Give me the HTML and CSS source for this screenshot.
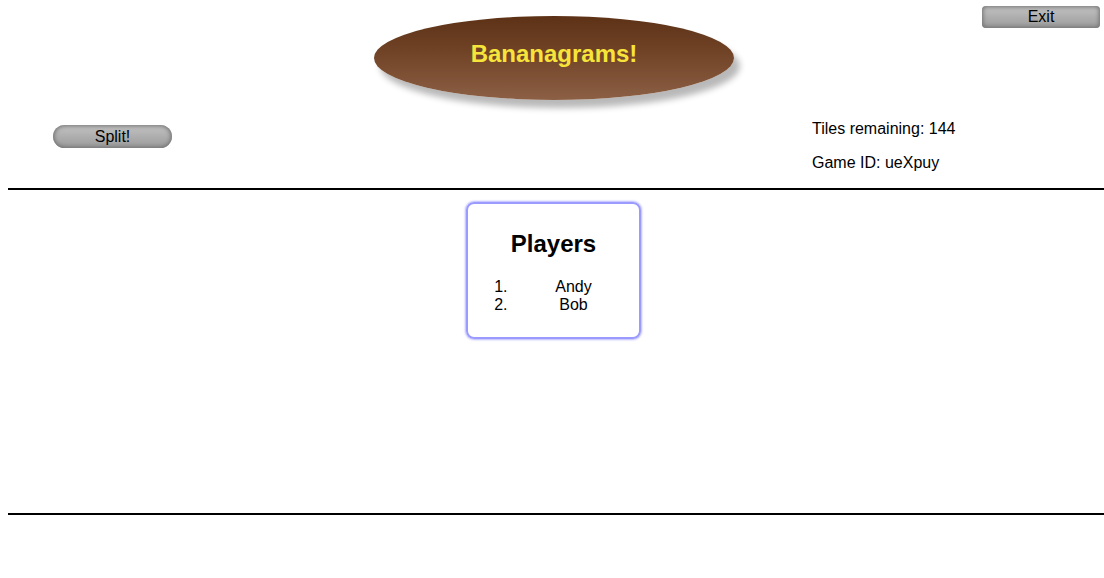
FILE: index.html
```html
<!DOCTYPE html>
<html>
<head>
<meta charset="utf-8">
<title>Bananagrams</title>
<link rel="stylesheet" href="styles.css">
</head>
<body>
<div class="page">
  <header class="header">
    <div></div>
    <div class="title"><span>Bananagrams!</span></div>
    <button class="btn exit">Exit</button>
  </header>
  <section class="controls">
    <button class="btn split">Split!</button>
    <div class="stats">
      <p>Tiles remaining: 144</p>
      <p>Game ID: ueXpuy</p>
    </div>
  </section>
  <div class="rule"></div>
  <main class="board">
    <div class="players">
      <h2>Players</h2>
      <ol>
        <li>Andy</li>
        <li>Bob</li>
      </ol>
    </div>
  </main>
  <div class="rule"></div>
</div>
</body>
</html>
```
FILE: styles.css
```css
html, body {
  margin: 0;
  padding: 0;
  background: #fff;
  overflow: hidden;
}
body {
  font-family: "Liberation Sans", Arial, sans-serif;
  font-size: 16px;
  color: #000;
}
.page {
  padding: 0 0 0 8px;
}
.header {
  display: grid;
  grid-template-columns: 1fr 360px 1fr;
  padding-top: 6px;
  padding-right: 4px;
  height: 94px;
}
.title {
  margin-top: 10px;
  width: 360px;
  height: 84px;
  border-radius: 50%;
  background: linear-gradient(to bottom, #5c3116 0%, #74462a 50%, #8c6045 100%);
  box-shadow: 6px 8px 6px rgba(0, 0, 0, 0.28);
  display: flex;
  align-items: center;
  justify-content: center;
}
.title span {
  color: #f7e43a;
  font-weight: bold;
  font-size: 24px;
  margin-top: -8px;
}
.btn {
  font-family: "Liberation Sans", Arial, sans-serif;
  font-size: 16px;
  color: #000;
  border: none;
  padding: 0;
  background: linear-gradient(to bottom, #c4c4c4 0%, #aeaeae 50%, #9c9c9c 100%);
  box-shadow: inset 0 0 4px 1px #707070;
  line-height: 22px;
}
.exit {
  justify-self: end;
  align-self: start;
  width: 118px;
  height: 22px;
  border-radius: 4px;
}
.controls {
  display: flex;
  align-items: flex-start;
}
.split {
  margin-top: 25px;
  margin-left: 45px;
  width: 119px;
  height: 23px;
  border-radius: 12px;
}
.stats {
  margin-left: auto;
  width: 292px;
  padding-top: 4px;
}
.stats p {
  margin: 16px 0;
  line-height: 18px;
}
.rule {
  border-top: 2px solid #000;
}
.board {
  height: 323px;
  padding-right: 5px;
  display: flex;
  justify-content: center;
  align-items: flex-start;
}
.players {
  margin-top: 12px;
  width: 171px;
  padding: 6px 0;
  border: 2px solid #9a9aff;
  border-radius: 8px;
  box-shadow: 0 0 2px 1px #b8b8ff;
  text-align: center;
}
.players h2 {
  font-size: 24px;
  margin: 20px 0;
  line-height: 28px;
}
.players ol {
  margin: 18px 0 17px;
  padding-left: 44px;
  padding-right: 4px;
  line-height: 18px;
}
```
